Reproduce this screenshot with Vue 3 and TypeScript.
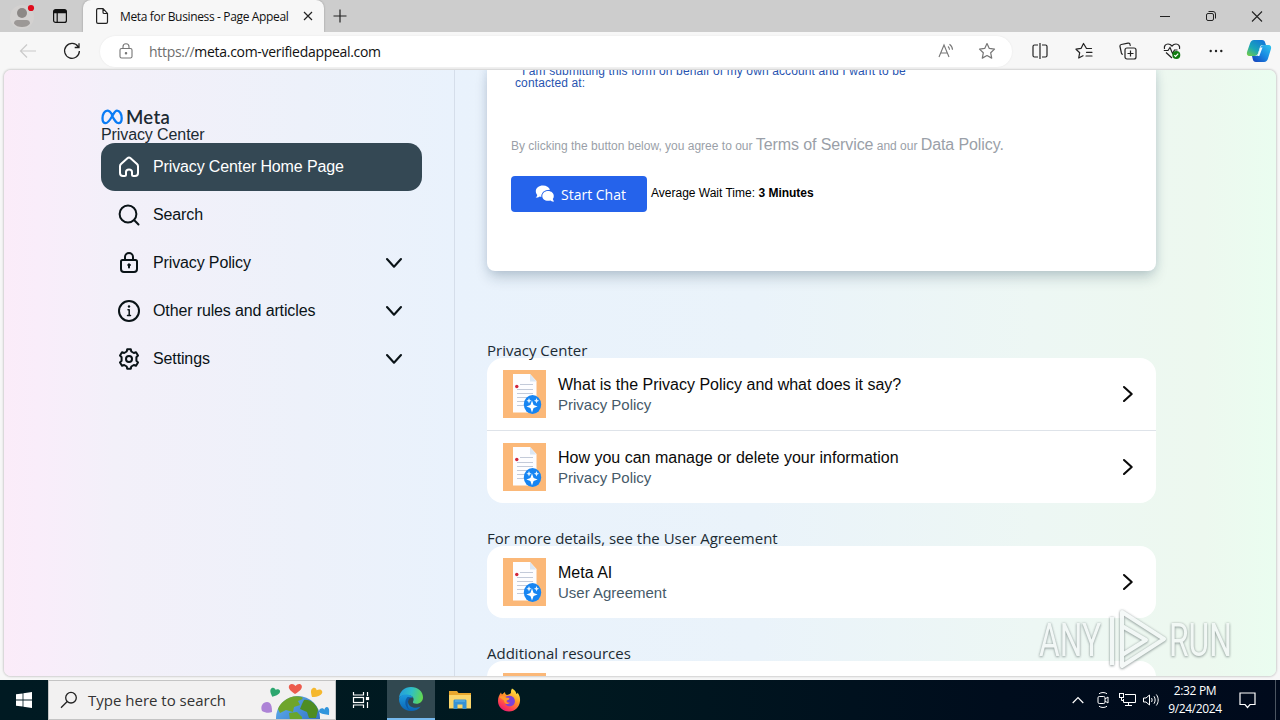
<script setup lang="ts">
interface NavItem { id: string; label: string; active?: boolean; expandable?: boolean }
interface Article { title: string; source: string }
interface Section { heading: string; cls: string; articles: Article[] }

const nav: NavItem[] = [
  { id: 'home', label: 'Privacy Center Home Page', active: true },
  { id: 'search', label: 'Search' },
  { id: 'lock', label: 'Privacy Policy', expandable: true },
  { id: 'info', label: 'Other rules and articles', expandable: true },
  { id: 'gear', label: 'Settings', expandable: true },
]

const sections: Section[] = [
  {
    heading: 'Privacy Center',
    cls: 'h-a',
    articles: [
      { title: 'What is the Privacy Policy and what does it say?', source: 'Privacy Policy' },
      { title: 'How you can manage or delete your information', source: 'Privacy Policy' },
    ],
  },
  {
    heading: 'For more details, see the User Agreement',
    cls: 'h-b',
    articles: [{ title: 'Meta AI', source: 'User Agreement' }],
  },
  {
    heading: 'Additional resources',
    cls: 'h-c',
    articles: [{ title: 'Generative AI', source: 'Privacy Center' }],
  },
]
</script>

<template>
  <div class="desktop">
    <header class="titlebar">
      <div class="profile">
        <svg width="32" height="28" viewBox="0 0 32 28">
          <circle cx="15" cy="15" r="12" fill="#d3d1d0" />
          <circle cx="15" cy="11" r="5" fill="#8c8886" />
          <path d="M7 21.5c0-2.2 1.300-3.500 3.500-3.500h9c2.200 0 3.500 1.300 3.500 3.500C21.500 24 18.500 25 15 25s-6.500-1-8-3.500z" fill="#9c9896" />
          <circle cx="24" cy="6" r="3.100" fill="#e00b1c" />
        </svg>
      </div>
      <svg class="workspaces" width="16" height="16" viewBox="0 0 16 16" fill="none" stroke="#111" stroke-width="1.200">
        <rect x="1.600" y="1.600" width="12.800" height="12.800" rx="2" />
        <path d="M1.600 4.200h12.800M2 3h12" stroke-width="2" />
        <path d="M5.200 4v10" />
      </svg>
      <div class="tab">
        <svg width="14" height="18" viewBox="0 0 14 18" fill="none" stroke="#222" stroke-width="1.200">
          <path d="M1.600 3c0-.8.6-1.400 1.400-1.400h5l4.500 4.800V15c0 .8-.6 1.400-1.400 1.400H3c-.8 0-1.400-.6-1.400-1.400zM8 1.800v3.400c0 .8.500 1.300 1.300 1.300h3" />
        </svg>
        <span class="tab-title">Meta for Business - Page Appeal</span>
        <svg class="tab-close" width="10" height="10" viewBox="0 0 10 10" stroke="#222" stroke-width="1.200"><path d="M1 1l8 8M9 1l-8 8" /></svg>
      </div>
      <svg class="newtab" width="14" height="14" viewBox="0 0 14 14" stroke="#222" stroke-width="1.200"><path d="M7 .5v13M.5 7h13" /></svg>
      <div class="winctl">
        <svg width="46" height="32" viewBox="0 0 46 32"><path d="M18 16.500h10" stroke="#222" /></svg>
        <svg width="46" height="32" viewBox="0 0 46 32" fill="none" stroke="#222"><rect x="18.500" y="13.500" width="7" height="7" rx="1.500" /><path d="M20.500 11.500h4.500a2.500 2.500 0 0 1 2.500 2.500v4.500" /></svg>
        <svg width="46" height="32" viewBox="0 0 46 32" stroke="#222" stroke-width="1.100"><path d="M18 11.500l10 10M28 11.500l-10 10" /></svg>
      </div>
    </header>

    <div class="toolbar">
      <svg class="back" width="18" height="16" viewBox="0 0 18 16" fill="none" stroke="#cacaca" stroke-width="1.200"><path d="M17 8H2M8 1.500L1.500 8 8 14.500" /></svg>
      <svg class="reload" width="18" height="18" viewBox="0 0 18 18" fill="none" stroke="#222" stroke-width="1.300"><path d="M15.200 4.800A7.400 7.400 0 1 0 16.400 9M16 1.200v4.300h-4.300" /></svg>
      <div class="address">
        <svg width="14" height="16" viewBox="0 0 14 16" fill="none" stroke="#767676" stroke-width="1.100"><rect x="1" y="5.500" width="12" height="9.500" rx="1.600" /><path d="M4 5.500V3.700a3 3 0 0 1 6 0v1.800" /><circle cx="7" cy="10.200" r=".7" fill="#555" /></svg>
        <span class="url"><i>https://</i>meta.com-verifiedappeal.com</span>
        <svg class="read" width="18" height="16" viewBox="0 0 18 16" fill="none" stroke="#767676" stroke-width="1.100"><path d="M1 14L6 2l5 12M2.700 10h6.600M10 3.500c1 .9 1.500 2 1.500 3.300M11.500 1.200c2 1.500 3 3.200 3 5.600" /></svg>
        <svg width="18" height="18" viewBox="0 0 18 18" fill="none" stroke="#767676" stroke-width="1.200" stroke-linejoin="round"><path d="M9 1.500l2.300 4.900 5.200.7-3.800 3.700 1 5.300L9 13.500l-4.700 2.600 1-5.300L1.500 7.100l5.200-.7z" /></svg>
      </div>
      <svg class="ti split" width="18" height="18" viewBox="0 0 18 18" fill="none" stroke="#222" stroke-width="1.200"><path d="M7 3H3.500c-1 0-1.500.5-1.500 1.500v9c0 1 .5 1.500 1.500 1.500H7M11 3h3.500c1 0 1.500.5 1.500 1.500v9c0 1-.5 1.500-1.500 1.500H11M9 1v16" /></svg>
      <svg class="ti" width="18" height="18" viewBox="0 0 18 18" fill="none" stroke="#222" stroke-width="1.200" stroke-linejoin="round" stroke-linecap="round"><path d="M16.500 6.500h-5L8.500 1.500 6 6.400l-5 .8 3.700 3.500-1 5.300L8 13.700M11.500 10.300h5.500M11 14h6" /></svg>
      <svg class="ti" width="18" height="18" viewBox="0 0 18 18" fill="none" stroke="#222" stroke-width="1.200"><rect x="6" y="6" width="11" height="11" rx="2" /><path d="M11.500 8.500v6M8.500 11.500h6M3.800 12.500c-.8-.2-1.200-.7-1.400-1.500L1 4.500c-.2-1 .3-1.800 1.300-2L9 1.100c1-.2 1.800.3 2 1.300l.4 1.400" /></svg>
      <svg class="ti" width="18" height="18" viewBox="0 0 18 18" fill="none" stroke="#222" stroke-width="1.200"><path d="M1.500 7C.8 4 2.500 2 5 2c1.700 0 3 .8 4 2 1-1.200 2.300-2 4-2 2.500 0 4.200 2 3.500 5M3 10.500l6 5.500M.8 8.500H5l2-3 2.500 6 2-3.500h3" /><circle cx="13.300" cy="13" r="4" fill="#107c10" stroke="none" /><path d="M11.300 13.200l1.300 1.300 2.600-2.800" stroke="#fff" /></svg>
      <svg class="ti" width="18" height="18" viewBox="0 0 18 18" fill="#222"><circle cx="3.700" cy="9" r="1.200" /><circle cx="9" cy="9" r="1.200" /><circle cx="14.300" cy="9" r="1.200" /></svg>
      <svg class="copilot" width="26" height="24" viewBox="0 0 26 24">
        <defs>
          <linearGradient id="cp1" x1="0" y1="1" x2=".8" y2="0"><stop offset="0" stop-color="#7bcf3c" /><stop offset=".45" stop-color="#1aa6b8" /><stop offset="1" stop-color="#1376d8" /></linearGradient>
          <linearGradient id="cp2" x1="0" y1="1" x2="1" y2="0"><stop offset="0" stop-color="#173bb8" /><stop offset=".5" stop-color="#1788e2" /><stop offset="1" stop-color="#31c7ee" /></linearGradient>
        </defs>
        <path d="M8 1h8c2 0 2.700 1 3.200 2.800L20 6h-3c-2 0-2.600.8-3.200 2.600l-1.600 5.400c-.7 2-1.600 3-3.800 3H4c-3 0-3.600-2-2.800-4.600L4 4.500C4.700 2.200 5.800 1 8 1z" fill="url(#cp1)" />
        <path d="M18 23h-8c-2 0-2.700-1-3.200-2.800L6 17h3c2 0 3-.8 3.600-2.800L14.200 9c.7-2 1.600-3 3.800-3h4c3 0 3.600 2 2.800 4.600L22 19.500c-.7 2.300-1.800 3.500-4 3.500z" fill="url(#cp2)" />
        <path d="M14.300 8.500h2.200l-3.200 8.500h-2z" fill="#f1fbff" />
      </svg>
    </div>

    <div class="frame">
      <div class="page">
        <aside class="sidebar">
          <div class="logo">
            <svg width="22" height="16" viewBox="0 0 22 16" fill="none" stroke="#0a7cf5" stroke-width="2.300"><path d="M11 5.300C9.500 2.900 8.200 1.600 6.400 1.600 3.600 1.600 1.500 5.200 1.500 9.300c0 3 1.200 4.900 3.200 4.900 2 0 3.200-1.400 6.300-6.700 2-3.500 3-5.900 5-5.900 2.700 0 4.700 3.700 4.700 7.700 0 3-1.200 4.900-3.200 4.900-2 0-3-1.200-6.500-7.400z" /></svg>
            <span>Meta</span>
          </div>
          <div class="brand-sub">Privacy Center</div>
          <nav>
            <a v-for="item in nav" :key="item.id" class="nav-item" :class="{ active: item.active }">
              <svg class="nav-icon" width="24" height="24" viewBox="0 0 24 24" fill="none" stroke="currentColor" stroke-width="2" stroke-linejoin="round" stroke-linecap="round">
                <path v-if="item.id === 'home'" d="M3 11.200c0-.9.400-1.600 1-2.200l6.400-5.800c1-.9 2.200-.9 3.200 0L20 9c.6.600 1 1.300 1 2.200V18c0 2-1 3-3 3h-1.500c-1 0-1.500-.5-1.500-1.500V17c0-1.500-1-2.500-3-2.500S9 15.500 9 17v2.500c0 1-.5 1.500-1.500 1.500H6c-2 0-3-1-3-3z" />
                <template v-else-if="item.id === 'search'"><circle cx="11" cy="11" r="8.400" /><path d="M17.300 17.300l4.200 4.200" /></template>
                <template v-else-if="item.id === 'lock'"><path d="M5.500 9h13c1 0 1.500.5 1.500 1.500V18c0 2-1 3-3 3H7c-2 0-3-1-3-3v-7.500C4 9.500 4.500 9 5.500 9zM8 9V6a4 4 0 0 1 8 0v3" /><circle cx="12" cy="14" r="1.200" fill="currentColor" stroke-width="1" /><path d="M12 14v2.500" /></template>
                <template v-else-if="item.id === 'info'"><circle cx="12" cy="12" r="10" /><path d="M11 10.800h1.200v5.700M10.500 16.500h3" stroke-width="1.500" /><circle cx="12" cy="7.500" r="1.200" fill="currentColor" stroke="none" /></template>
                <template v-else><path d="M9.700 4.500l.5-2.200h3.600l.5 2.200 2.500 1.500 2.200-.8L21 8.500 19.400 10.200v3.600L21 15.500l-2 3.300-2.200-.8-2.500 1.500-.5 2.200h-3.600l-.5-2.200L7.200 18l-2.200.8-2-3.300 1.600-1.700v-3.600L3 8.500l2-3.300 2.200.8z" /><circle cx="12" cy="12" r="3" /></template>
              </svg>
              <span class="nav-label" :class="'l-' + item.id">{{ item.label }}</span>
              <svg v-if="item.expandable" width="18" height="12" viewBox="0 0 18 12" fill="none" stroke="#0a1317" stroke-width="2.100" stroke-linecap="round" stroke-linejoin="round"><path d="M2 2l7 7.700L16 2" /></svg>
            </a>
          </nav>
        </aside>

        <main class="main">
          <section class="form-card">
            <p class="consent">&nbsp; I am submitting this form on behalf of my own account and I want to be<br />contacted at:</p>
            <p class="terms"><span class="t1">By clicking the button below, you agree to our </span><a>Terms of Service</a><span class="t2"> and our </span><a class="dp">Data Policy.</a></p>
            <div class="chat-row">
              <button class="chat">
                <svg width="20" height="18" viewBox="0 0 20 18" fill="#fff"><path d="M8 .5C3.800.5.800 3 .800 6.300c0 1.500.6 2.700 1.500 3.700-.2 1-.8 2-1.600 2.800 1.600 0 3-.4 4.100-1.200.5.200 1 .3 1.500.4C6 8 9 4.800 15 4.800 14 2.200 11.500.5 8 .5z" /><path d="M13 6c-3.400 0-5.700 2.200-5.700 4.900s2.300 4.900 5.700 4.900c.9 0 1.700-.1 2.400-.4 1 .8 2.300 1.200 3.800 1.200-.7-.8-1.200-1.600-1.400-2.500.7-.9 1-2 1-3.200C18.800 8.200 16.400 6 13 6z" /></svg>
                <span>Start Chat</span>
              </button>
              <span class="wait">Average Wait Time: <b>3 Minutes</b></span>
            </div>
          </section>

          <template v-for="s in sections" :key="s.heading">
            <h2 :class="s.cls">{{ s.heading }}</h2>
            <section class="list">
              <a v-for="(a, i) in s.articles" :key="a.title" class="row">
                <svg class="thumb" width="43" height="48" viewBox="0 0 43 48">
                  <rect width="43" height="48" fill="#fbb878" />
                  <path d="M10 4h17l6.500 7v31.500H10z" fill="#fdfdff" />
                  <path d="M27 4l6.500 7.500H27z" fill="#dce7f3" />
                  <path d="M17 14.500h13M14 19.500h16M14 23.500h16M14 27.500h16M14 31.500h9M14 35.500h8" stroke="#c3cad9" />
                  <circle cx="13.800" cy="16.500" r="1.700" fill="#d0273d" />
                  <ellipse cx="29.500" cy="34.500" rx="8.700" ry="9.500" fill="#1785f2" />
                  <path d="M29 30.500l1.600 4.400 4 1.600-4 1.600L29 42.500l-1.600-4.400-4-1.600 4-1.600z" fill="#fff" />
                  <path d="M26 28l.8 2 1.800.8-1.800.8-.8 2-.8-2-1.800-.8 1.800-.8zM33.500 28l.8 2 1.800.8-1.800.8-.8 2-.8-2-1.800-.8 1.800-.8z" fill="#e8f6ff" />
                </svg>
                <span class="row-text"><span class="row-title" :class="'r' + i">{{ a.title }}</span><span class="row-src">{{ a.source }}</span></span>
                <svg width="12" height="18" viewBox="0 0 12 18" fill="none" stroke="#0a0a0a" stroke-width="2.100" stroke-linecap="round" stroke-linejoin="round"><path d="M2 2l7.700 7L2 16" /></svg>
              </a>
            </section>
          </template>
        </main>
      </div>
    </div>

    <footer class="taskbar">
      <div class="start"><svg width="16" height="16" viewBox="0 0 16 16" fill="#fff"><path d="M0 2.300L6.600 1.400v6.200H0zM7.400 1.300L16 0v7.600H7.400zM0 8.400h6.600v6.200L0 13.700zM7.400 8.400H16V16l-8.600-1.300z" /></svg></div>
      <div class="search">
        <svg width="18" height="18" viewBox="0 0 18 18" fill="none" stroke="#222" stroke-width="1.300"><circle cx="11" cy="6.700" r="5.300" /><path d="M7.200 10.500L1 16.700" /></svg>
        <span>Type here to search</span>
        <svg class="earth" width="72" height="38" viewBox="0 0 72 38">
          <defs><linearGradient id="ea" x1="0" y1="0" x2="1" y2="1"><stop offset="0" stop-color="#62b2ef" /><stop offset="1" stop-color="#2460b8" /></linearGradient></defs>
          <circle cx="38" cy="37" r="22" fill="url(#ea)" />
          <path d="M24 20c5-4 11-6 18-4 2 2-1 3-4 4l2 4-6 2-1 5-7-2-6 3-2-4c1-3 3-6 6-8z" fill="#6fa52b" />
          <path d="M44 19c6-1 12 4 14 10l-2 8h-7l-2-6-7-3 2-5z" fill="#4e8d22" />
          <path d="M29 32l8-1 5 5v3H30z" fill="#69a52c" />
          <path d="M35 13c-5-3.500-7.500-6-5.500-9C31.500 2 34 3 35.500 5c1.500-2 4.500-3 6-.7 1.500 3-1.500 6-6.500 8.700z" fill="#ec5b4d" />
          <path d="M13 16c-2-3-4-6-2-8.300 1.800-1.600 3.700-.4 4.200 1 1.400-1.300 4-1.200 4.700.6.600 2.800-2.700 5.200-6.900 6.700z" fill="#2ca66f" transform="rotate(8 15 11)" />
          <path d="M52 16c-1-4-2-7.500 1-9 2.300-.8 3.500 1 3.700 2.300 2-1.200 5-1 5.600 1.400.4 3-4.300 5.300-10.300 5.300z" fill="#f5b82e" />
          <path d="M2 30c-2-5 1-9 5-9 4 .3 5 4 5 10-3 1.500-7 .8-10-1z" fill="#ad83d6" />
          <path d="M60 28c2-1.500 4-.5 4.300.8.5-2.300 2.500-3.600 3.900-2.200 1.600 2 .8 5 .8 7.400-3.500-.6-8-1-10-3 0-1 .3-2.300 1-3z" fill="#3095dc" />
        </svg>
      </div>
      <div class="task view"><svg width="18" height="18" viewBox="0 0 18 18" fill="none" stroke="#fff" stroke-width="1.200"><path d="M1.500 1v3h10V1M1.500 17v-3h10v3M15.500 1v4M15.500 11v6" /><rect x="1.500" y="6.500" width="10" height="5" /><rect x="14.500" y="6.500" width="2" height="2" fill="#fff" /></svg></div>
      <div class="task edge">
        <svg width="26" height="26" viewBox="0 0 26 26">
          <defs>
            <linearGradient id="e1" x1="0" y1=".3" x2="1" y2=".5"><stop offset="0" stop-color="#249bdd" /><stop offset=".5" stop-color="#2fbfc6" /><stop offset="1" stop-color="#62d84f" /></linearGradient>
            <linearGradient id="e2" x1="0" y1="0" x2="0" y2="1"><stop offset="0" stop-color="#1c9ade" /><stop offset="1" stop-color="#0b64b4" /></linearGradient>
          </defs>
          <path d="M1 12C1.500 5.500 6.500 1 13 1c7 0 12 4.800 12 10.200 0 4-3 6.500-6.500 6.500-2.600 0-4-1-3.500-2 1.500-2.500.5-6-4-6.500C6.500 8.500 2.500 10 1 12z" fill="url(#e1)" />
          <path d="M1 13c.5-3 4-5 8.500-4.500 3 .3 4.800 1.700 5.500 3.200-3-.7-5 1-5 4 0 4 4 6.300 8 6 2-.2 3.500-.7 4.700-1.300C20.500 23.500 17 25 13 25 6 25 1 19.500 1 13z" fill="url(#e2)" />
          <path d="M9.500 11C5.500 15 7 23 14 25c-4.500-.7-4.800-7-4-9.300.3-2 2-3.500 3.500-3.700-1-.9-2.500-1.300-4-1z" fill="#0c4f9b" opacity=".75" />
        </svg>
      </div>
      <div class="task"><svg width="22" height="20" viewBox="0 0 22 20"><path d="M0 1h8l1.500 2H22v15H0z" fill="#e8a72d" /><path d="M0 5h22v13.500H0z" fill="#fbd66b" /><path d="M4.500 19v-8c0-1 .5-1.500 1.500-1.500h10c1 0 1.500.5 1.500 1.500v8h-4v-4.500h-5V19z" fill="#3692d6" /><path d="M6 11h10" stroke="#67bae9" /></svg></div>
      <div class="task"><svg width="24" height="24" viewBox="0 0 24 24">
        <defs><linearGradient id="ff" x1=".8" y1="0" x2=".2" y2="1"><stop offset="0" stop-color="#fff04a" /><stop offset=".4" stop-color="#ff9b26" /><stop offset=".75" stop-color="#ff4051" /><stop offset="1" stop-color="#e51478" /></linearGradient></defs>
        <path d="M15 .5c3 1.500 4 3.500 4.500 5.500 1-.3 1-1 1-1.500C22.500 7 23.300 10 23 13c-.5 6-5 10.500-11 10.500S1 19 1 13c0-3.500 1-6 3-8.500.2 1 .6 1.600 1 2L8 4c0 1.500.6 2.500 2 3 1.500-.4 3-1 4-2-.3-1.500 0-3 1-4.500z" fill="url(#ff)" />
        <path d="M7.500 10c2-2.500 6-3 8.500-1s2.500 6 .3 8c-2.700 2.300-7 1.500-8.300-1.500 2 1 4 .5 5.200-.8-2-.2-3.200-1-4-2.200-.2-.8-.8-1.600-1.700-2.500z" fill="#7b42d8" />
        <path d="M2 9c2-1.500 5-1.500 7 .5 1.500.2 3 .3 3.500 1-.5 1.500-2 1.500-3 2.200-.7 1.300.5 2.600 2.500 2.800-2.500 1.500-5-.5-5-3z" fill="#ff9a2c" />
      </svg></div>
      <div class="tray">
        <svg class="up" width="12" height="8" viewBox="0 0 12 8" fill="none" stroke="#fff" stroke-width="1.200"><path d="M.7 7L6 1.500 11.300 7" /></svg>
        <svg class="meet" width="12" height="18" viewBox="0 0 12 18" fill="none" stroke="#fff"><rect x="1" y="5.500" width="7" height="7" rx="1.300" /><path d="M8 8l3-2v6l-3-2M2 2.800c2-1.700 6-1.700 8 0M2 15.200c2 1.700 6 1.700 8 0" /></svg>
        <svg class="net" width="17" height="16" viewBox="0 0 17 16" fill="none" stroke="#fff"><path d="M6 2.500h10.500v8h-12V7M9.500 10.500v3M6 13.500h7" /><rect x=".5" y="1.500" width="4" height="4" /><path d="M2.500 5.500v3h2" /></svg>
        <svg class="vol" width="17" height="14" viewBox="0 0 17 14" fill="none" stroke="#fff"><path d="M.5 5v4h2.500l3.500 3V2L3 5zM8.500 5c.8 1.200.8 2.800 0 4M11 3.300c1.500 2.200 1.500 5.200 0 7.400M13.300 1.500c2.500 3.300 2.500 7.700 0 11" /></svg>
        <div class="clock"><span>2:32 PM</span><span>9/24/2024</span></div>
        <svg class="note" width="17" height="17" viewBox="0 0 17 17" fill="none" stroke="#fff" stroke-width="1.200"><path d="M1 1h15v11.500h-5L8.500 15.500 6 12.500H1z" /></svg>
        <i class="peek"></i>
      </div>
    </footer>

    <div class="watermark">
      <svg width="200" height="68" viewBox="0 0 200 68">
        <g class="wm-text">
          <text x="3" y="50" textLength="62" lengthAdjust="spacingAndGlyphs">ANY</text>
          <text x="133" y="50" textLength="63" lengthAdjust="spacingAndGlyphs">RUN</text>
        </g>
        <g class="wm-mark" fill="none" stroke-linejoin="round">
          <path d="M76 11v48" />
          <path d="M86 6l42 27-42 27z" />
          <path d="M86 20l24 14-24 15" />
        </g>
      </svg>
    </div>
  </div>
</template>

<style>
body { margin: 0; overflow: hidden; }
</style>

<style scoped>
* { box-sizing: border-box; }
svg { display: block; flex: none; }
.desktop { position: relative; width: 1280px; height: 720px; display: flex; flex-direction: column; overflow: hidden; background: #f7f7f7; font-family: "Open Sans", "Noto Sans", sans-serif; white-space: nowrap; }

.titlebar { height: 32px; flex: none; display: flex; background: #cdcdcd; }
.profile { width: 52px; padding: 2px 0 0 7px; }
.workspaces { margin-top: 8px; }
.tab { width: 241px; height: 32px; margin-left: 15px; background: #f7f7f7; border-radius: 8px 8px 0 0; box-shadow: 0 0 2px rgba(0, 0, 0, .3); display: flex; align-items: center; padding-left: 12px; }
.tab-title { width: 170px; margin-left: 11px; font-size: 12px; letter-spacing: -.35px; color: #111; }
.tab-close { margin-left: 13px; }
.newtab { margin: 9px 0 0 9px; }
.winctl { display: flex; margin-left: auto; }

.toolbar { height: 38px; flex: none; display: flex; align-items: center; background: #f7f7f7; }
.back { margin-left: 19px; }
.reload { margin-left: 26px; }
.address { width: 912px; height: 31px; margin-left: 19px; padding: 0 16px 0 19px; border-radius: 16px; background: #fff; box-shadow: 0 0 2px rgba(0, 0, 0, .08); display: flex; align-items: center; }
.url { margin-left: 16px; font-size: 14px; letter-spacing: -.3px; color: #111; }
.url i { font-style: normal; color: #6e6e6e; }
.read { margin-left: auto; margin-right: 22px; }
.ti { margin-right: 26px; }
.split { margin-left: 19px; }
.copilot { margin-left: -5px; }

.frame { height: 610px; flex: none; padding: 0 4px 4px; background: #f7f7f7; }
.page { height: 606px; display: flex; overflow: hidden; border-radius: 7px; box-shadow: 0 0 2px 1px rgba(0, 0, 0, .16); background: linear-gradient(90deg, #fbecf9 0, #f9edfa 34px, #f3f0f9 110px, #edf1fa 300px, #e9f2fc 450px, #eaf3fa 750px, #edf7f4 1030px, #edf8ef 1200px, #eafdf0 1272px); }
.sidebar { width: 451px; flex: none; padding: 38px 0 0 97px; border-right: 1px solid #d5deea; font-family: "Liberation Sans", Arial, sans-serif; }
.logo { display: flex; align-items: center; height: 18px; }
.logo span { margin-left: 3px; font: 600 18.500px/18px "Noto Sans", sans-serif; font-family: Lato, "Noto Sans", sans-serif; letter-spacing: .3px; color: #1c2b33; }
.brand-sub { height: 17px; line-height: 17px; font-size: 16px; letter-spacing: -.1px; color: #1c2b33; }
.nav-item { width: 321px; height: 48px; display: flex; align-items: center; padding: 0 19px 0 16px; border-radius: 14px; color: #0a1317; }
.nav-item.active { background: #344854; color: #fff; }
.nav-label { flex: 1; margin-left: 12px; font-size: 16px; letter-spacing: -.13px; }

.main { width: 669px; flex: none; margin-left: 32px; }
.form-card { height: 206px; padding: 0 24px; border-radius: 0 0 8px 8px; background: #fff; box-shadow: 0 8px 14px -2px rgba(20, 50, 70, .22), 0 0 8px rgba(80, 120, 170, .14); }
.consent { margin: -5px 0 0 4px; height: 24px; font: 12px/12px "Liberation Sans", Arial, sans-serif; letter-spacing: .12px; color: #2854b0; }
.terms { margin: 46px 0 0; height: 20px; line-height: 20px; font-family: "Liberation Sans", Arial, sans-serif; font-size: 12px; color: #9a9fa8; white-space: pre; }
.terms a { font-size: 16px; letter-spacing: -.1px; }
.chat-row { display: flex; margin-top: 21px; }
.chat { width: 136px; height: 36px; border: 0; border-radius: 4px; padding: 0 0 0 24px; display: flex; align-items: center; background: #2563eb; color: #fff; font-family: "Open Sans", sans-serif; font-size: 14px; }
.chat span { margin-left: 6px; }
.wait { margin-left: 4px; line-height: 34px; font-family: "Liberation Sans", Arial, sans-serif; font-size: 12px; color: #000; }

h2 { margin: 28px 0 0; height: 15px; line-height: 15px; font-size: 15px; font-weight: 400; color: #1c2b33; }
h2.h-a { margin-top: 72px; }
.list { border-radius: 16px; background: #fff; overflow: hidden; }
.row { height: 72px; display: flex; align-items: center; padding: 0 22px 0 16px; font-family: "Liberation Sans", Arial, sans-serif; }
.row + .row { height: 73px; border-top: 1px solid #dee3e9; }
.row-text { flex: 1; margin-left: 12px; display: flex; flex-direction: column; }
.row-title { font-size: 16px; line-height: 20px; color: #0a0a0a; }
.row-src { font-size: 15px; line-height: 19px; color: #465a69; }

.taskbar { height: 40px; flex: none; display: flex; background: linear-gradient(90deg, #001a22 0, #001920 560px, #000d1d 1000px, #000a1c 100%); }
.start { width: 48px; display: flex; align-items: center; justify-content: center; }
.search { width: 288px; height: 40px; display: flex; align-items: center; padding-left: 11px; background: #f2f1f1; border: 1px solid #c4c4c4; }
.search span { width: 170px; margin-left: 10px; font-size: 15px; color: #333; }
.earth { align-self: flex-end; margin-left: 2px; }
.task { width: 49px; height: 40px; display: flex; align-items: center; justify-content: center; }
.view { width: 51px; padding-right: 2px; }
.edge { width: 48px; background: #314850; border-bottom: 2px solid #76b9ed; }
.tray { margin-left: auto; display: flex; align-items: center; color: #fff; }
.meet { margin-left: 13px; }
.net { margin-left: 10px; }
.vol { margin-left: 7px; }
.clock { width: 70px; display: flex; flex-direction: column; text-align: center; font-size: 12px; line-height: 18px; letter-spacing: -.35px; }
.note { margin-left: 9px; }
.peek { width: 5px; height: 40px; margin-left: 19px; border-left: 1px solid #4b5561; }

.watermark { position: absolute; left: 1036px; top: 606px; filter: drop-shadow(0 1px 1px rgba(90, 105, 105, .5)) drop-shadow(0 0 1px rgba(90, 105, 105, .45)); opacity: .85; }
.wm-text { font: 46px Roboto, sans-serif; fill: #f4f8f7; }
.wm-mark { stroke: #f4f8f7; stroke-width: 4; }
</style>
